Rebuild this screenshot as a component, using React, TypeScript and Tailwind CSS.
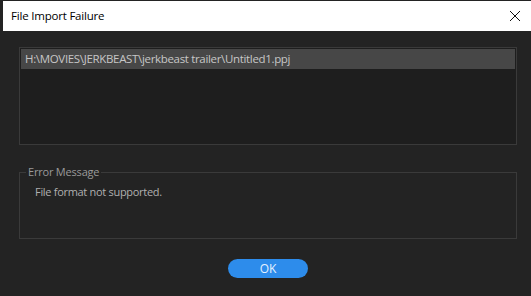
import React from "react";

export default function App() {
  return (
    <div
      className="w-[531px] h-[296px] bg-[#232323] flex flex-col overflow-hidden"
      style={{ fontFamily: '"Open Sans", "Noto Sans", sans-serif' }}
    >
      <div className="pt-px pl-[3px]">
        <div className="h-[30px] bg-white flex items-center justify-between pl-[8px] pr-[8px]">
          <span className="text-[11.5px] text-black tracking-[-0.2px]">File Import Failure</span>
          <svg width="12" height="12" viewBox="0 0 12 12" className="mr-[2px]">
            <path d="M1 1 L11 11 M11 1 L1 11" stroke="#111" strokeWidth="1" fill="none" />
          </svg>
        </div>
      </div>
      <div className="flex flex-col pl-[19px] pr-[14px]">
        <div className="mt-[16px] h-[98px] border border-[#3a3a3a] bg-[#1e1e1e] p-px">
          <div className="h-[20px] bg-[#474747] flex items-center pl-[4px] text-[11.5px] text-[#c6c6c6] tracking-[-0.33px]">
            H:\MOVIES\JERKBEAST\jerkbeast trailer\Untitled1.ppj
          </div>
        </div>
        <div className="relative mt-[27px] h-[67px] border border-[#3a3a3a] flex flex-col">
          <span className="absolute top-[-8px] left-[6px] px-[2px] bg-[#232323] text-[11px] text-[#9a9a9a] tracking-[-0.2px] leading-[14px]">
            Error Message
          </span>
          <div className="flex mt-[12px]">
            <div className="w-[15px] shrink-0" />
            <span className="text-[11px] text-[#b0b0b0] tracking-[-0.3px] leading-[14px]">
              File format not supported.
            </span>
          </div>
        </div>
        <div className="flex justify-center mt-[20px]">
          <button className="w-[80px] h-[19px] rounded-full bg-[#2d8ceb] text-[12px] text-[#e4f1ff] leading-none flex items-center justify-center">
            OK
          </button>
        </div>
      </div>
    </div>
  );
}
